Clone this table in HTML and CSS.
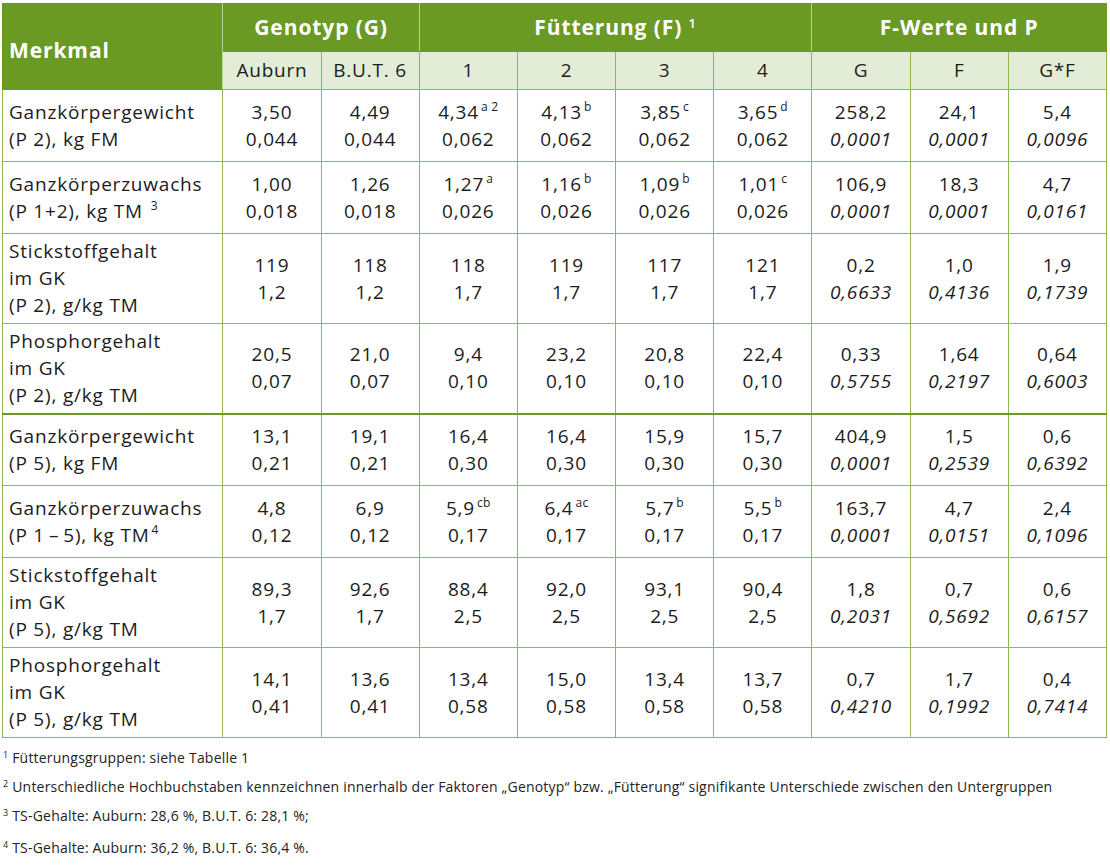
FILE: index.html
```html
<!DOCTYPE html>
<html lang="de">
<head>
<meta charset="utf-8">
<title>Tabelle</title>
<link rel="stylesheet" href="styles.css">
</head>
<body>
<div class="wrap">
<table class="data">
  <colgroup>
    <col class="c-label">
    <col class="c-num"><col class="c-num">
    <col class="c-num"><col class="c-num"><col class="c-num"><col class="c-num">
    <col class="c-num"><col class="c-num"><col class="c-num">
  </colgroup>
  <thead>
    <tr class="h1">
      <th rowspan="2" class="merkmal">Merkmal</th>
      <th colspan="2">Genotyp (G)</th>
      <th colspan="4">Fütterung (F) <sup>1</sup></th>
      <th colspan="3">F-Werte und P</th>
    </tr>
    <tr class="h2">
      <th>Auburn</th><th>B.U.T. 6</th>
      <th>1</th><th>2</th><th>3</th><th>4</th>
      <th>G</th><th>F</th><th>G*F</th>
    </tr>
  </thead>
  <tbody>
    <tr class="r2">
      <td class="lbl">Ganzkörpergewicht<br>(P 2), kg FM</td>
      <td>3,50<br>0,044</td><td>4,49<br>0,044</td>
      <td>4,34<sup>a 2</sup><br>0,062</td><td>4,13<sup>b</sup><br>0,062</td><td>3,85<sup>c</sup><br>0,062</td><td>3,65<sup>d</sup><br>0,062</td>
      <td>258,2<br><i>0,0001</i></td><td>24,1<br><i>0,0001</i></td><td>5,4<br><i>0,0096</i></td>
    </tr>
    <tr class="r2">
      <td class="lbl">Ganzkörperzuwachs<br>(P 1+2), kg TM <sup>3</sup></td>
      <td>1,00<br>0,018</td><td>1,26<br>0,018</td>
      <td>1,27<sup>a</sup><br>0,026</td><td>1,16<sup>b</sup><br>0,026</td><td>1,09<sup>b</sup><br>0,026</td><td>1,01<sup>c</sup><br>0,026</td>
      <td>106,9<br><i>0,0001</i></td><td>18,3<br><i>0,0001</i></td><td>4,7<br><i>0,0161</i></td>
    </tr>
    <tr class="r3">
      <td class="lbl">Stickstoffgehalt<br>im GK<br>(P 2), g/kg TM</td>
      <td>119<br>1,2</td><td>118<br>1,2</td>
      <td>118<br>1,7</td><td>119<br>1,7</td><td>117<br>1,7</td><td>121<br>1,7</td>
      <td>0,2<br><i>0,6633</i></td><td>1,0<br><i>0,4136</i></td><td>1,9<br><i>0,1739</i></td>
    </tr>
    <tr class="r3">
      <td class="lbl">Phosphorgehalt<br>im GK<br>(P 2), g/kg TM</td>
      <td>20,5<br>0,07</td><td>21,0<br>0,07</td>
      <td>9,4<br>0,10</td><td>23,2<br>0,10</td><td>20,8<br>0,10</td><td>22,4<br>0,10</td>
      <td>0,33<br><i>0,5755</i></td><td>1,64<br><i>0,2197</i></td><td>0,64<br><i>0,6003</i></td>
    </tr>
    <tr class="r2 sep">
      <td class="lbl">Ganzkörpergewicht<br>(P 5), kg FM</td>
      <td>13,1<br>0,21</td><td>19,1<br>0,21</td>
      <td>16,4<br>0,30</td><td>16,4<br>0,30</td><td>15,9<br>0,30</td><td>15,7<br>0,30</td>
      <td>404,9<br><i>0,0001</i></td><td>1,5<br><i>0,2539</i></td><td>0,6<br><i>0,6392</i></td>
    </tr>
    <tr class="r2">
      <td class="lbl">Ganzkörperzuwachs<br>(P 1&#8201;–&#8201;5), kg TM<sup>4</sup></td>
      <td>4,8<br>0,12</td><td>6,9<br>0,12</td>
      <td>5,9<sup>cb</sup><br>0,17</td><td>6,4<sup>ac</sup><br>0,17</td><td>5,7<sup>b</sup><br>0,17</td><td>5,5<sup>b</sup><br>0,17</td>
      <td>163,7<br><i>0,0001</i></td><td>4,7<br><i>0,0151</i></td><td>2,4<br><i>0,1096</i></td>
    </tr>
    <tr class="r3">
      <td class="lbl">Stickstoffgehalt<br>im GK<br>(P 5), g/kg TM</td>
      <td>89,3<br>1,7</td><td>92,6<br>1,7</td>
      <td>88,4<br>2,5</td><td>92,0<br>2,5</td><td>93,1<br>2,5</td><td>90,4<br>2,5</td>
      <td>1,8<br><i>0,2031</i></td><td>0,7<br><i>0,5692</i></td><td>0,6<br><i>0,6157</i></td>
    </tr>
    <tr class="r3">
      <td class="lbl">Phosphorgehalt<br>im GK<br>(P 5), g/kg TM</td>
      <td>14,1<br>0,41</td><td>13,6<br>0,41</td>
      <td>13,4<br>0,58</td><td>15,0<br>0,58</td><td>13,4<br>0,58</td><td>13,7<br>0,58</td>
      <td>0,7<br><i>0,4210</i></td><td>1,7<br><i>0,1992</i></td><td>0,4<br><i>0,7414</i></td>
    </tr>
  </tbody>
</table>
<div class="notes">
  <p class="fn"><sup>1</sup> Fütterungsgruppen: siehe Tabelle 1</p>
  <p class="fn"><sup>2</sup> Unterschiedliche Hochbuchstaben kennzeichnen innerhalb der Faktoren „Genotyp“ bzw. „Fütterung“ signifikante Unterschiede zwischen den Untergruppen</p>
  <p class="fn"><sup>3</sup> TS-Gehalte: Auburn: 28,6 %, B.U.T. 6: 28,1 %;</p>
  <p class="fn fn-last"><sup>4</sup> TS-Gehalte: Auburn: 36,2 %, B.U.T. 6: 36,4 %.</p>
</div>
</div>
</body>
</html>
```
FILE: styles.css
```css
html, body {
  margin: 0;
  padding: 0;
  background: #ffffff;
}
body {
  font-family: "Open Sans", "Liberation Sans", sans-serif;
  color: #1c1c1c;
}
.wrap {
  padding: 3px 0 0 2px;
}
.data {
  border-collapse: collapse;
  table-layout: fixed;
  width: 1105px;
  font-size: 19px;
  line-height: 27px;
  letter-spacing: 0.8px;
}
.c-label { width: 220px; }
.c-num { width: 98px; }
.data th, .data td {
  border: 1px solid #8dbb4a;
  text-align: center;
  vertical-align: middle;
  padding: 0 2px;
}
.h1 th {
  background: #6b9a24;
  color: #ffffff;
  font-weight: 700;
  font-size: 21px;
  letter-spacing: 0.9px;
  height: 47px;
  border-color: #6b9a24;
  border-left-color: #b7d493;
  border-right-color: #b7d493;
}
.h1 th:first-child { border-left-color: #6b9a24; }
.h1 th:last-child { border-right-color: #6b9a24; }
.h1 th sup {
  font-size: 13px;
  vertical-align: 7px;
  line-height: 0;
  font-weight: 600;
}
.merkmal {
  text-align: left !important;
  padding-left: 6px !important;
  padding-top: 8px !important;
}
.h2 th {
  background: #e3ecd7;
  font-weight: 400;
  color: #1c1c1c;
  height: 37px;
}
.r2 { height: 72px; }
.r3 { height: 90px; }
.data td.lbl {
  text-align: left;
  padding-left: 6px;
}
.data td sup {
  font-size: 12px;
  letter-spacing: 0.3px;
  vertical-align: 8px;
  line-height: 0;
  margin-left: 2px;
}
.data i { font-style: italic; }
.sep td { border-top: 2px solid #6b9a24; }
.notes {
  font-size: 14px;
  letter-spacing: 0.2px;
  color: #222;
  padding-top: 10px;
}
.fn {
  margin: 0 0 10px 1px;
  line-height: 19px;
}
.fn-last { margin-top: 13px; }
.fn sup {
  font-size: 9px;
  vertical-align: 5px;
  line-height: 0;
}
```
